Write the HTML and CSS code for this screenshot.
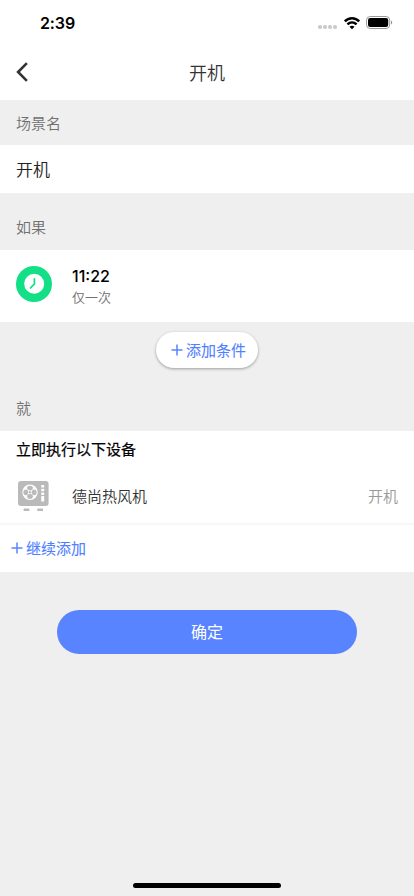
FILE: index.html
```html
<!DOCTYPE html>
<html lang="zh-CN">
<head>
<meta charset="utf-8">
<meta name="viewport" content="width=device-width, initial-scale=1">
<title>开机</title>
<link rel="stylesheet" href="styles.css">
</head>
<body>
<div class="screen">
  <div class="status">
    <span class="clock">2:39</span>
    <span class="status-icons">
      <svg class="dots" width="20" height="4" viewBox="0 0 20 4" fill="#cbcbcb"><rect x="0" width="4" height="4" rx="1.7"/><rect x="5" width="4" height="4" rx="1.7"/><rect x="10" width="4" height="4" rx="1.7"/><rect x="15" width="4" height="4" rx="1.7"/></svg>
      <svg class="wifi" width="16" height="12" viewBox="0 0 16 12" fill="none" stroke="#000" stroke-width="2.4"><path d="M.8 4.4C4.8 .1 11.2 .1 15.2 4.4"/><path d="M3.4 7.4c2.7-2.6 6.5-2.6 9.2 0"/><path d="M8 12.2 5.5 9.7c1.4-1.3 3.6-1.3 5 0z" fill="#000" stroke="none"/></svg>
      <svg class="battery" width="27" height="13" viewBox="0 0 27 13"><rect x=".5" y=".5" width="23.2" height="12" rx="3.7" fill="none" stroke="#999"/><rect x="2" y="2" width="20.2" height="9" rx="2.3"/><path d="M25 4.5c1.7.7 1.7 3.3 0 4z" fill="#999"/></svg>
    </span>
  </div>
  <header class="nav">
    <svg class="back" width="14" height="20" viewBox="0 0 14 20" fill="none" stroke="#333" stroke-width="2.6"><path d="M11.9 1.2 3.1 10l8.8 8.8"/></svg>
    <h1>开机</h1>
  </header>
  <div class="label label-name">场景名</div>
  <div class="name">开机</div>
  <div class="label label-if">如果</div>
  <section class="condition">
    <svg width="36" height="36" viewBox="0 0 36 36"><circle cx="18" cy="18" r="18" fill="#13df86"/><circle cx="18.2" cy="17.7" r="10" fill="#fff"/><path d="M18.4 12.8v5.1l-4 4.1" fill="none" stroke="#13df86" stroke-width="1.7" stroke-linecap="round" stroke-linejoin="round"/></svg>
    <div class="when"><div class="time">11:22</div><div class="repeat">仅一次</div></div>
  </section>
  <div class="add-row">
    <button class="add"><svg width="12" height="12" viewBox="0 0 12 12" stroke="#5884ff" stroke-width="1.5"><path d="M6 .5v11M.5 6h11"/></svg><span>添加条件</span></button>
  </div>
  <div class="label">就</div>
  <section class="actions">
    <h2>立即执行以下设备</h2>
    <div class="device">
      <svg width="32" height="32" viewBox="0 0 32 32">
        <rect x="1" y="1" width="30.6" height="25" rx="3" fill="#bababa"/>
        <circle cx="13" cy="12.3" r="7.7" fill="#fff"/>
        <g fill="#bababa"><ellipse cx="13" cy="8.1" rx="2.9" ry="2.4"/><ellipse cx="13" cy="16.5" rx="2.9" ry="2.4"/><ellipse cx="8.8" cy="12.3" rx="2.4" ry="2.9"/><ellipse cx="17.2" cy="12.3" rx="2.4" ry="2.9"/><circle cx="13" cy="12.3" r="1.2"/>
        <rect x="6.6" y="28.4" width="5.8" height="2.6" rx=".6"/><rect x="20.2" y="28.4" width="5.8" height="2.6" rx=".6"/></g>
        <g fill="#fff"><rect x="24.2" y="5" width="3" height="2.4" rx=".4"/><rect x="24.2" y="8.8" width="3" height="2.4" rx=".4"/><rect x="24.2" y="12.5" width="3" height="2.4" rx=".4"/><rect x="24.2" y="16" width="3" height="5.5" rx=".4"/></g>
      </svg>
      <span class="device-name">德尚热风机</span>
      <span class="device-state">开机</span>
    </div>
    <div class="more"><svg width="12" height="12" viewBox="0 0 12 12" stroke="#5884ff" stroke-width="1.5"><path d="M6 .5v11M.5 6h11"/></svg><span>继续添加</span></div>
  </section>
  <button class="confirm">确定</button>
  <div class="home"></div>
</div>
</body>
</html>
```
FILE: styles.css
```css
* { box-sizing: border-box; }
body { margin: 0; font-family: "Noto Sans CJK SC", sans-serif; font-weight: 350; color: #333; }
h1, h2 { margin: 0; }
button { border: 0; padding: 0; font-family: inherit; }
svg { display: block; flex: none; }
.screen { width: 414px; height: 896px; background: #efefef; display: flex; flex-direction: column; overflow: hidden; }
.status { height: 44px; flex: none; background: #fff; display: flex; justify-content: space-between; padding: 0 21px 0 40px; }
.clock { font: 600 16px/46px Inter, sans-serif; letter-spacing: -.1px; color: #000; }
.status-icons { display: flex; align-items: flex-start; }
.dots { margin: 25px 6px 0 0; }
.wifi { margin: 17px 6px 0 0; overflow: visible; }
.battery { margin-top: 16px; }
.nav { height: 56px; flex: none; background: #fff; display: grid; grid-template-columns: 60px 1fr 60px; align-items: center; }
.back { margin-left: 15px; }
.nav h1 { font-size: 18px; font-weight: 350; line-height: 56px; text-align: center; }
.label { height: 45px; flex: none; padding-left: 16px; font-size: 15px; line-height: 44px; color: #707070; }
.label-name { line-height: 45px; }
.name { height: 48px; flex: none; padding-left: 16px; background: #fff; font-size: 17px; line-height: 48px; color: #222; }
.label-if { height: 57px; padding-top: 12px; }
.condition { height: 72px; flex: none; background: #fff; display: flex; padding: 15px 16px 0; }
.condition > svg { margin-top: 1px; }
.when { margin-left: 20px; }
.time { font: 500 16px/22px Inter, sans-serif; color: #000; }
.repeat { font-size: 13px; line-height: 20px; color: #707070; }
.add-row { height: 64px; flex: none; padding-top: 10px; display: flex; justify-content: center; }
.add { width: 102px; height: 36px; border-radius: 18px; background: #fff; box-shadow: 0 1px 3px rgba(0,0,0,.35); color: #5080ff; font-size: 15px; font-weight: 400; display: flex; align-items: center; justify-content: center; gap: 3px; padding-left: 3px; }
.add span, .more span { padding-bottom: 2px; -webkit-text-stroke: .1px currentColor; }
.actions { height: 141px; flex: none; background: #fff; }
.actions h2 { height: 37px; padding-left: 16px; font-size: 15px; font-weight: 400; line-height: 36px; color: #000; -webkit-text-stroke: .2px currentColor; }
.device { height: 57px; display: flex; align-items: center; padding: 0 16px 0 17px; border-bottom: 2px solid #f8f8f8; font-size: 15px; }
.device-name { margin-left: 23px; }
.device-state { margin-left: auto; color: #999; }
.more { height: 47px; display: flex; align-items: center; padding-left: 11px; gap: 3px; color: #5080ff; font-size: 15px; font-weight: 400; }
.more svg { margin-top: -2px; }
.confirm { width: 300px; height: 44px; flex: none; margin: 38px auto 0; padding-bottom: 2px; border-radius: 22px; background: #5884ff; color: #fff; font-size: 16px; }
.home { width: 148px; height: 5px; flex: none; margin: auto auto 8px; border-radius: 3px; background: #000; }
```
